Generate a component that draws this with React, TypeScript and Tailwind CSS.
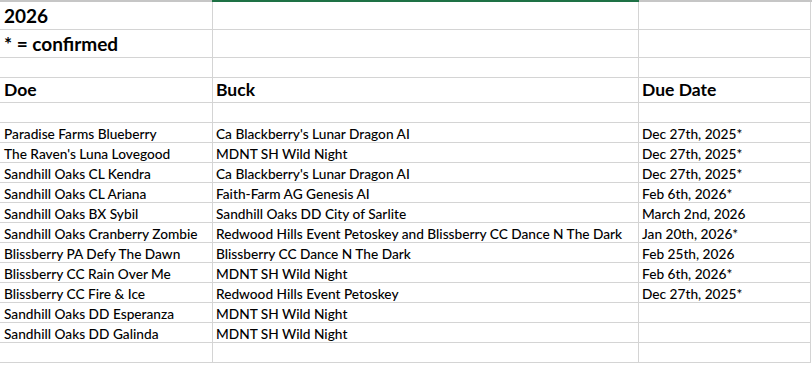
import React from 'react'

type Row = { doe: string; buck: string; due: string }

const rows: Row[] = [
  { doe: 'Paradise Farms Blueberry', buck: "Ca Blackberry's Lunar Dragon AI", due: 'Dec 27th, 2025*' },
  { doe: "The Raven's Luna Lovegood", buck: 'MDNT SH Wild Night', due: 'Dec 27th, 2025*' },
  { doe: 'Sandhill Oaks CL Kendra', buck: "Ca Blackberry's Lunar Dragon AI", due: 'Dec 27th, 2025*' },
  { doe: 'Sandhill Oaks CL Ariana', buck: 'Faith-Farm AG Genesis AI', due: 'Feb 6th, 2026*' },
  { doe: 'Sandhill Oaks BX Sybil', buck: 'Sandhill Oaks DD City of Sarlite', due: 'March 2nd, 2026' },
  { doe: 'Sandhill Oaks Cranberry Zombie', buck: 'Redwood Hills Event Petoskey and Blissberry CC Dance N The Dark', due: 'Jan 20th, 2026*' },
  { doe: 'Blissberry PA Defy The Dawn', buck: 'Blissberry CC Dance N The Dark', due: 'Feb 25th, 2026' },
  { doe: 'Blissberry CC Rain Over Me', buck: 'MDNT SH Wild Night', due: 'Feb 6th, 2026*' },
  { doe: 'Blissberry CC Fire & Ice', buck: 'Redwood Hills Event Petoskey', due: 'Dec 27th, 2025*' },
  { doe: 'Sandhill Oaks DD Esperanza', buck: 'MDNT SH Wild Night', due: '' },
  { doe: 'Sandhill Oaks DD Galinda', buck: 'MDNT SH Wild Night', due: '' },
  { doe: '', buck: '', due: '' },
]

const cellA = 'w-[213px] shrink-0 border-r border-b border-[#d4d4d4] flex items-end pl-[4px] whitespace-nowrap'
const cellB = 'w-[426px] shrink-0 border-r border-b border-[#d4d4d4] flex items-end pl-[3px] whitespace-nowrap'
const cellC = 'w-[172px] shrink-0 border-r border-b border-[#d4d4d4] flex items-end pl-[3px] whitespace-nowrap'

const Line: React.FC<{ h: string; a?: string; b?: string; c?: string; txt?: string; pb: string }> = ({ h, a, b, c, txt = 'text-[13.7px] leading-[16px] font-medium', pb }) => (
  <div className={`flex ${h}`}>
    <div className={`${cellA} ${txt} ${pb}`}>{a}</div>
    <div className={`${cellB} ${txt} ${pb}`}>{b}</div>
    <div className={`${cellC} ${txt} ${pb}`}>{c}</div>
  </div>
)

const title = 'text-[19px] font-bold leading-[22px]'
const head = 'text-[17.5px] font-bold leading-[20px]'

export default function App() {
  return (
    <div className="w-[812px] h-[366px] overflow-hidden bg-white text-black" style={{ fontFamily: 'Lato, "Open Sans", sans-serif' }}>
      <div className="flex h-[2px]">
        <div className="w-[212px] shrink-0 bg-[#c6c6c6]" />
        <div className="w-[427px] shrink-0 bg-[#1e7145]" />
        <div className="flex-1 bg-[#c6c6c6]" />
      </div>
      <Line h="h-[28px]" a="2026" txt={title} pb="pb-[2px]" />
      <Line h="h-[28px]" a="* = confirmed" txt={title} pb="pb-[2px]" />
      <Line h="h-[20px]" pb="pb-[2px]" />
      <Line h="h-[25px]" a="Doe" b="Buck" c="Due Date" txt={head} pb="pb-[2px]" />
      <Line h="h-[20px]" pb="pb-[2px]" />
      {rows.map((r, i) => (
        <Line key={i} h="h-[20px]" a={r.doe} b={r.buck} c={r.due} pb="pb-0" />
      ))}
    </div>
  )
}
